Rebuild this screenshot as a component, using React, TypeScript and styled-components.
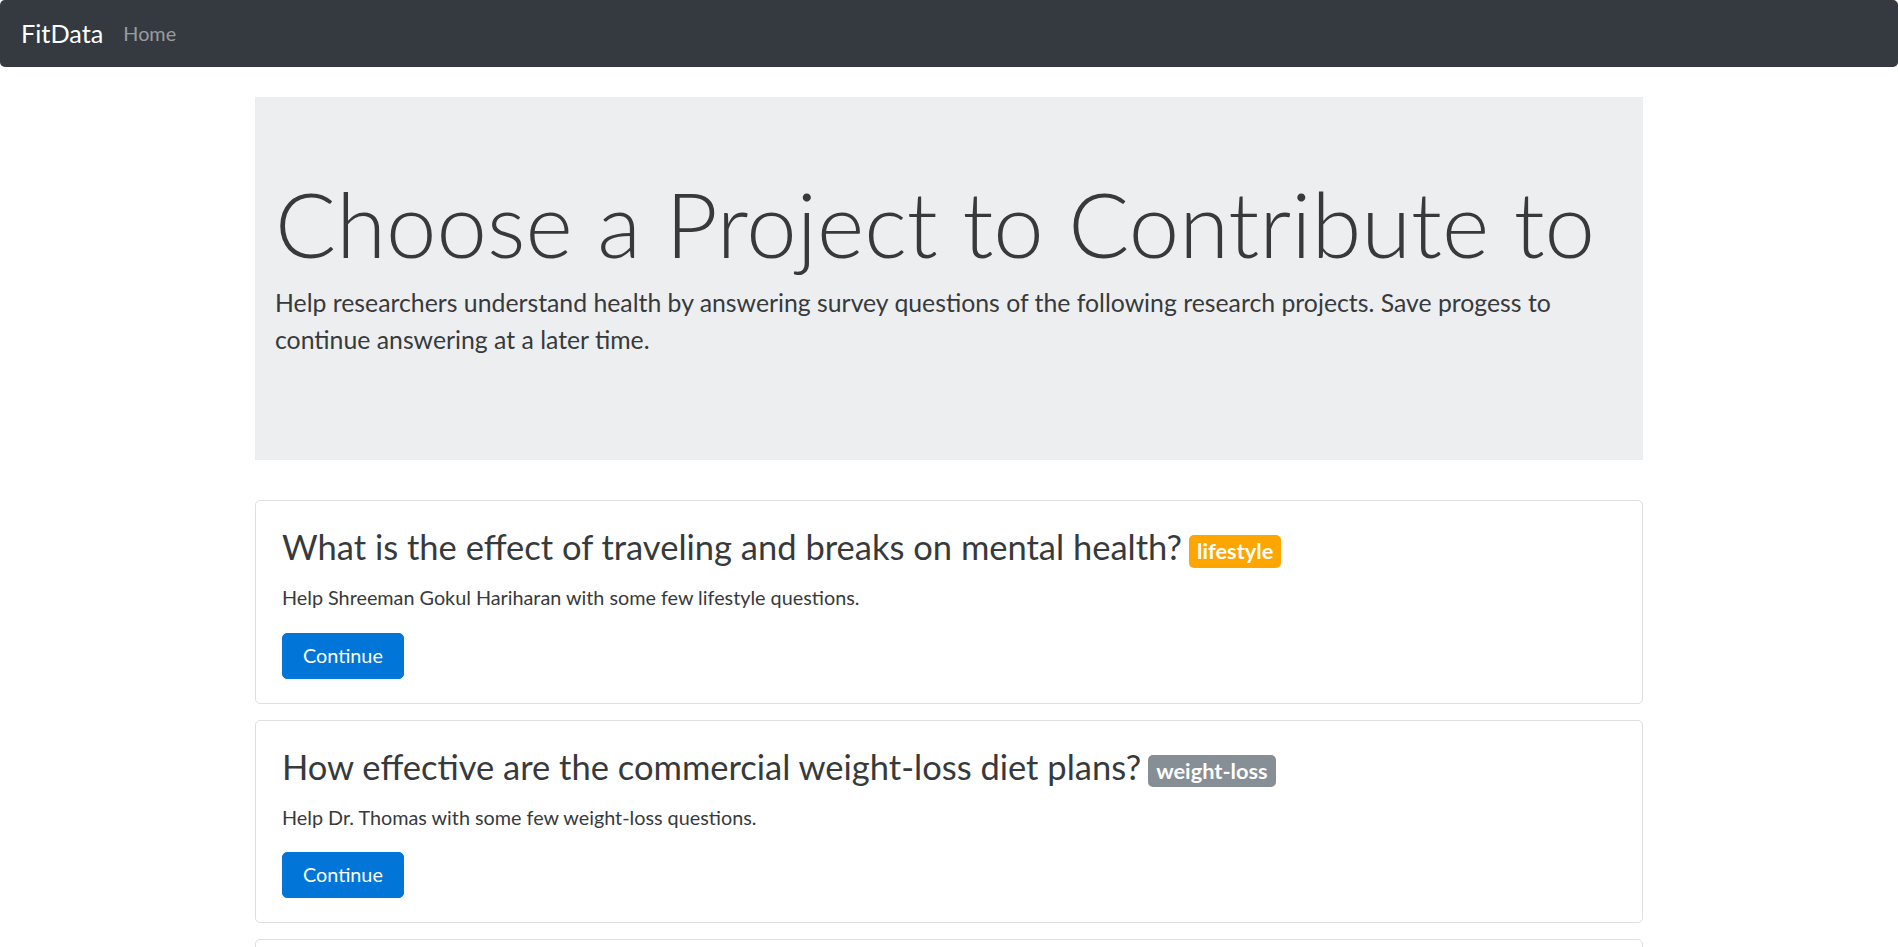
import React from 'react';
import styled, { createGlobalStyle } from 'styled-components';

type Project = {
  title: string;
  tag: string;
  tagColor: string;
  text: string;
};

const projects: Project[] = [
  {
    title: 'What is the effect of traveling and breaks on mental health?',
    tag: 'lifestyle',
    tagColor: '#ffa500',
    text: 'Help Shreeman Gokul Hariharan with some few lifestyle questions.',
  },
  {
    title: 'How effective are the commercial weight-loss diet plans?',
    tag: 'weight-loss',
    tagColor: '#868e96',
    text: 'Help Dr. Thomas with some few weight-loss questions.',
  },
  {
    title: 'How does sleep quality affect daily productivity?',
    tag: 'sleep',
    tagColor: '#17a2b8',
    text: 'Help Dr. Thomas with some few sleep questions.',
  },
];

const GlobalStyle = createGlobalStyle`
  html {
    font-size: 19.8px;
  }
  body {
    margin: 0;
    font-family: Lato, "Open Sans", "Liberation Sans", sans-serif;
    color: #373a3c;
    background: #fff;
    line-height: 1.5;
  }
  * {
    box-sizing: border-box;
  }
`;

const Navbar = styled.nav`
  height: 67px;
  background-color: #343a40;
  border-radius: 5px;
  display: flex;
  align-items: center;
  padding: 0 21px;
`;

const Brand = styled.a`
  font-size: 25.3px;
  color: #fff;
  margin-right: 20px;
  text-decoration: none;
`;

const NavLink = styled.a`
  font-size: 1rem;
  color: rgba(255, 255, 255, 0.5);
  text-decoration: none;
`;

const Container = styled.main`
  width: 1388px;
  margin: 30px auto 0;
`;

const Jumbotron = styled.section`
  background-color: #eceeef;
  min-height: 363px;
  padding: 77px 20px;
  margin-bottom: 40px;
`;

const Display = styled.h1`
  margin: 0 0 10px;
  font-size: 90.5px;
  font-weight: 300;
  line-height: 1.1;
`;

const Lead = styled.p`
  margin: 0;
  font-size: 24.8px;
  line-height: 1.5;
`;

const Card = styled.article`
  border: 1px solid rgba(0, 0, 0, 0.125);
  border-radius: 5px;
  padding: 24px 26px;
  margin-bottom: 16px;
`;

const CardTitle = styled.h3`
  margin: 0 0 15px;
  font-size: 34.5px;
  font-weight: 400;
  line-height: 1.25;
`;

const Badge = styled.span<{ $bg: string }>`
  display: inline-block;
  margin-left: 7px;
  background-color: ${p => p.$bg};
  color: #fff;
  font-size: 21.8px;
  font-weight: 700;
  line-height: 1;
  padding: 5px 8px 6px;
  border-radius: 5px;
  vertical-align: 1px;
`;

const CardText = styled.p`
  margin: 0 0 20px;
  font-size: 1rem;
  line-height: 1.5;
`;

const Button = styled.button`
  font-family: inherit;
  font-size: 1rem;
  line-height: 1.5;
  color: #fff;
  background-color: #0275d8;
  border: 1px solid #0275d8;
  border-radius: 5px;
  padding: 7px 20px;
  cursor: pointer;
`;

export default function App() {
  return (
    <>
      <GlobalStyle />
      <Navbar>
        <Brand href="#">FitData</Brand>
        <NavLink href="#">Home</NavLink>
      </Navbar>
      <Container>
        <Jumbotron>
          <Display>Choose a Project to Contribute to</Display>
          <Lead>
            Help researchers understand health by answering survey questions of
            the following research projects. Save progess to continue answering
            at a later time.
          </Lead>
        </Jumbotron>
        {projects.map(project => (
          <Card key={project.title}>
            <CardTitle>
              {project.title}
              <Badge $bg={project.tagColor}>{project.tag}</Badge>
            </CardTitle>
            <CardText>{project.text}</CardText>
            <Button>Continue</Button>
          </Card>
        ))}
      </Container>
    </>
  );
}
